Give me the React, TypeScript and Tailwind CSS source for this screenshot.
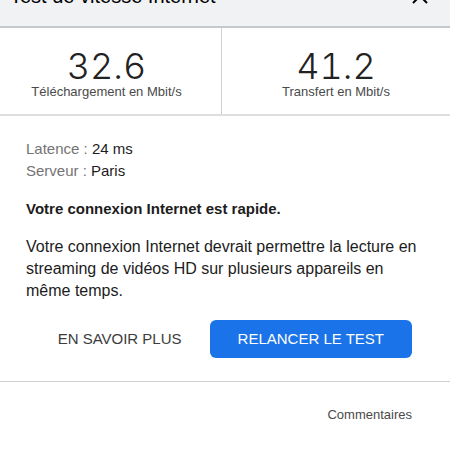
type ResultProps = { value: string; label: string };

function Result({ value, label }: ResultProps) {
  return (
    <div className="flex flex-col items-center pt-5 pb-[14px] first:pr-2">
      <dd className="order-1 font-['Inter',sans-serif] text-4xl leading-9 font-light tabular-nums text-[#222222]">
        {value}
      </dd>
      <dt className="order-2 text-[13px] leading-4 text-[#4a4a4a]">{label}</dt>
    </div>
  );
}

export default function App() {
  return (
    <main className="min-h-screen w-full overflow-hidden bg-white font-['Liberation_Sans',Arial,sans-serif] text-[#1c1c1c]">
      <header className="-mt-9 flex items-center justify-between border-b-2 border-[#c6c8ca] bg-[#f1f2f4] pt-5 pr-5 pb-[18px] pl-[10px]">
        <h1 className="text-xl leading-6 text-black">Test de vitesse Internet</h1>
        <button type="button" aria-label="Fermer" className="text-black">
          <svg viewBox="0 0 20 20" className="size-5" fill="none" stroke="currentColor" strokeWidth="2">
            <path d="M3 3 17 17M17 3 3 17" />
          </svg>
        </button>
      </header>

      <dl className="grid grid-cols-[222px_1fr] divide-x divide-[#d0d0d0] border-b-2 border-[#dedede]">
        <Result value="32.6" label="Téléchargement en Mbit/s" />
        <Result value="41.2" label="Transfert en Mbit/s" />
      </dl>

      <section className="px-[26px] pt-[22px] text-[15px] leading-[22px]">
        <p>
          <span className="text-[#747474]">Latence :</span> 24 ms
        </p>
        <p>
          <span className="text-[#747474]">Serveur :</span> Paris
        </p>
        <p className="mt-4 font-bold">Votre connexion Internet est rapide.</p>
        <p className="mt-4 text-base leading-[22px]">
          Votre connexion Internet devrait permettre la lecture en streaming de vidéos HD sur plusieurs appareils en
          même temps.
        </p>
      </section>

      <div className="flex items-center justify-end gap-7 pt-[18px] pr-[38px] pb-[23px]">
        <button type="button" className="text-[15px] text-[#3c3c3c]">
          EN SAVOIR PLUS
        </button>
        <button type="button" className="h-[38px] rounded-md bg-[#1a73e8] px-7 text-[15px] text-white">
          RELANCER LE TEST
        </button>
      </div>

      <footer className="flex justify-end border-t border-[#d0d0d0] pt-6 pr-[38px]">
        <a href="#commentaires" className="text-[13px] leading-[18px] text-[#4a4a4a]">
          Commentaires
        </a>
      </footer>
    </main>
  );
}
